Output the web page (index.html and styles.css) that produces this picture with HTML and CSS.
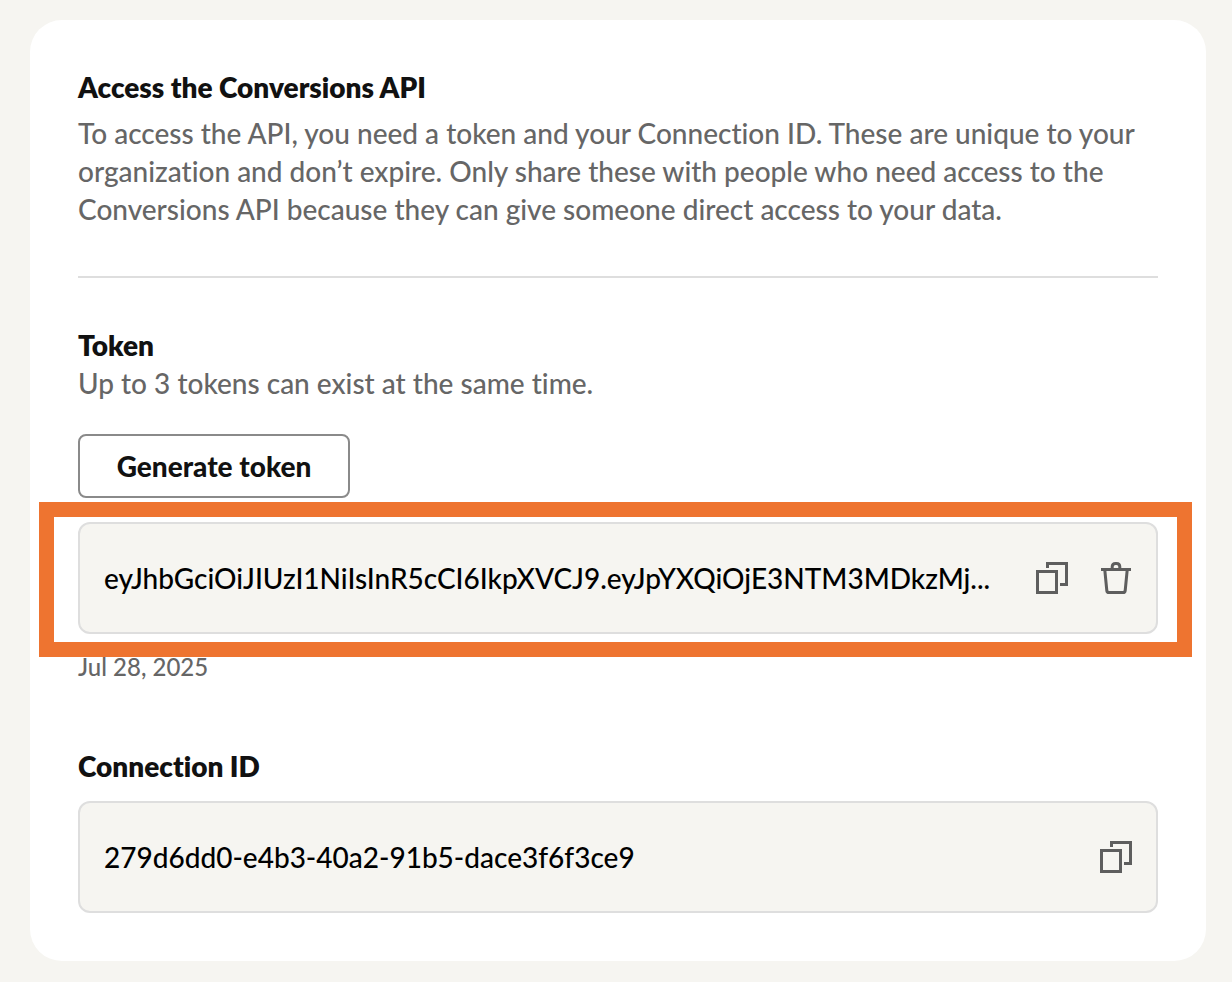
FILE: index.html
```html
<!DOCTYPE html>
<html lang="en">
<head>
  <meta charset="UTF-8">
  <meta name="viewport" content="width=device-width, initial-scale=1.0">
  <title>Conversions API</title>
  <link rel="stylesheet" href="styles.css">
</head>
<body>
  <main class="card">
    <section class="intro">
      <h1>Access the Conversions API</h1>
      <p>To access the API, you need a token and your Connection ID. These are unique to your organization and don’t expire. Only share these with people who need access to the Conversions API because they can give someone direct access to your data.</p>
    </section>

    <!-- Token -->
    <section class="token">
      <h2>Token</h2>
      <p>Up to 3 tokens can exist at the same time.</p>
      <button type="button" class="generate-button">Generate token</button>
      <div class="field highlighted">
        <span class="value">eyJhbGciOiJIUzI1NiIsInR5cCI6IkpXVCJ9.eyJpYXQiOjE3NTM3MDkzMj...</span>
        <button type="button" class="icon-button" aria-label="Copy token">
          <svg viewBox="0 0 32 32" aria-hidden="true">
            <rect x="1.5" y="9.5" width="19" height="21"/>
            <path d="M11.5 6V1.5h19v21H24"/>
          </svg>
        </button>
        <button type="button" class="icon-button" aria-label="Delete token">
          <svg viewBox="0 0 32 32" aria-hidden="true">
            <path d="M1 7.5h30"/>
            <path d="M12.2 7V4.800q0-3.300 3.300-3.300h1q3.300 0 3.300 3.300V7"/>
            <path d="M4.800 8l2 20.500q.2 2 2.200 2h14q2 0 2.200-2l2-20.500"/>
          </svg>
        </button>
      </div>
      <time class="date" datetime="2025-07-28">Jul 28, 2025</time>
    </section>

    <!-- Connection ID -->
    <section class="connection">
      <h2>Connection ID</h2>
      <div class="field">
        <span class="value">279d6dd0-e4b3-40a2-91b5-dace3f6f3ce9</span>
        <button type="button" class="icon-button" aria-label="Copy connection ID">
          <svg viewBox="0 0 32 32" aria-hidden="true">
            <rect x="1.5" y="9.5" width="19" height="21"/>
            <path d="M11.5 6V1.5h19v21H24"/>
          </svg>
        </button>
      </div>
    </section>
  </main>
</body>
</html>
```
FILE: styles.css
```css
* {
  box-sizing: border-box;
}
body {
  margin: 0;
  padding: 20px 26px 20px 30px;
  background: #f6f5f1;
  color: #111;
  font-family: Lato, sans-serif;
  font-size: 28px;
  font-variant-ligatures: none;
  line-height: 38px;
}
h1,
h2,
p {
  margin: 0;
  font-size: 28px;
}
h1,
h2 {
  font-weight: 800;
}
p {
  color: #666;
  font-weight: 500;
}
.card {
  padding: 48px;
  background: #fff;
  border-radius: 32px;
}
.intro {
  padding-bottom: 48px;
  border-bottom: 2px solid #dedede;
}
.intro h1 {
  margin-bottom: 8px;
}
.token {
  padding-top: 48px;
}
.generate-button {
  display: block;
  min-width: 272px;
  height: 64px;
  margin: 32px 0 24px;
  padding: 0 24px;
  background: #fff;
  border: 2px solid #8a8a8a;
  border-radius: 8px;
  color: #111;
  font: inherit;
  font-weight: 900;
  cursor: pointer;
}
.field {
  position: relative;
  display: flex;
  align-items: center;
  gap: 32px;
  height: 112px;
  padding: 0 24px;
  background: #f6f5f1;
  border: 2px solid #dedede;
  border-radius: 12px;
  color: #000;
  font-weight: 500;
}
.value {
  flex: 1;
  min-width: 0;
  overflow: hidden;
  white-space: nowrap;
}
/* orange frame around the token */
.highlighted::after {
  content: "";
  position: absolute;
  inset: -22px -36px -25px -41px;
  border: 15px solid #ee7430;
  pointer-events: none;
}
.icon-button {
  flex: none;
  width: 32px;
  height: 32px;
  padding: 0;
  background: none;
  border: none;
  cursor: pointer;
}
.icon-button svg {
  display: block;
  width: 32px;
  height: 32px;
  fill: none;
  stroke: #5e5e5e;
  stroke-width: 3;
}
.date {
  display: block;
  margin-top: 16px;
  color: #666;
  font-size: 24px;
  font-weight: 500;
  line-height: 33px;
}
.connection {
  padding-top: 64px;
}
.connection h2 {
  margin-bottom: 16px;
}
```
